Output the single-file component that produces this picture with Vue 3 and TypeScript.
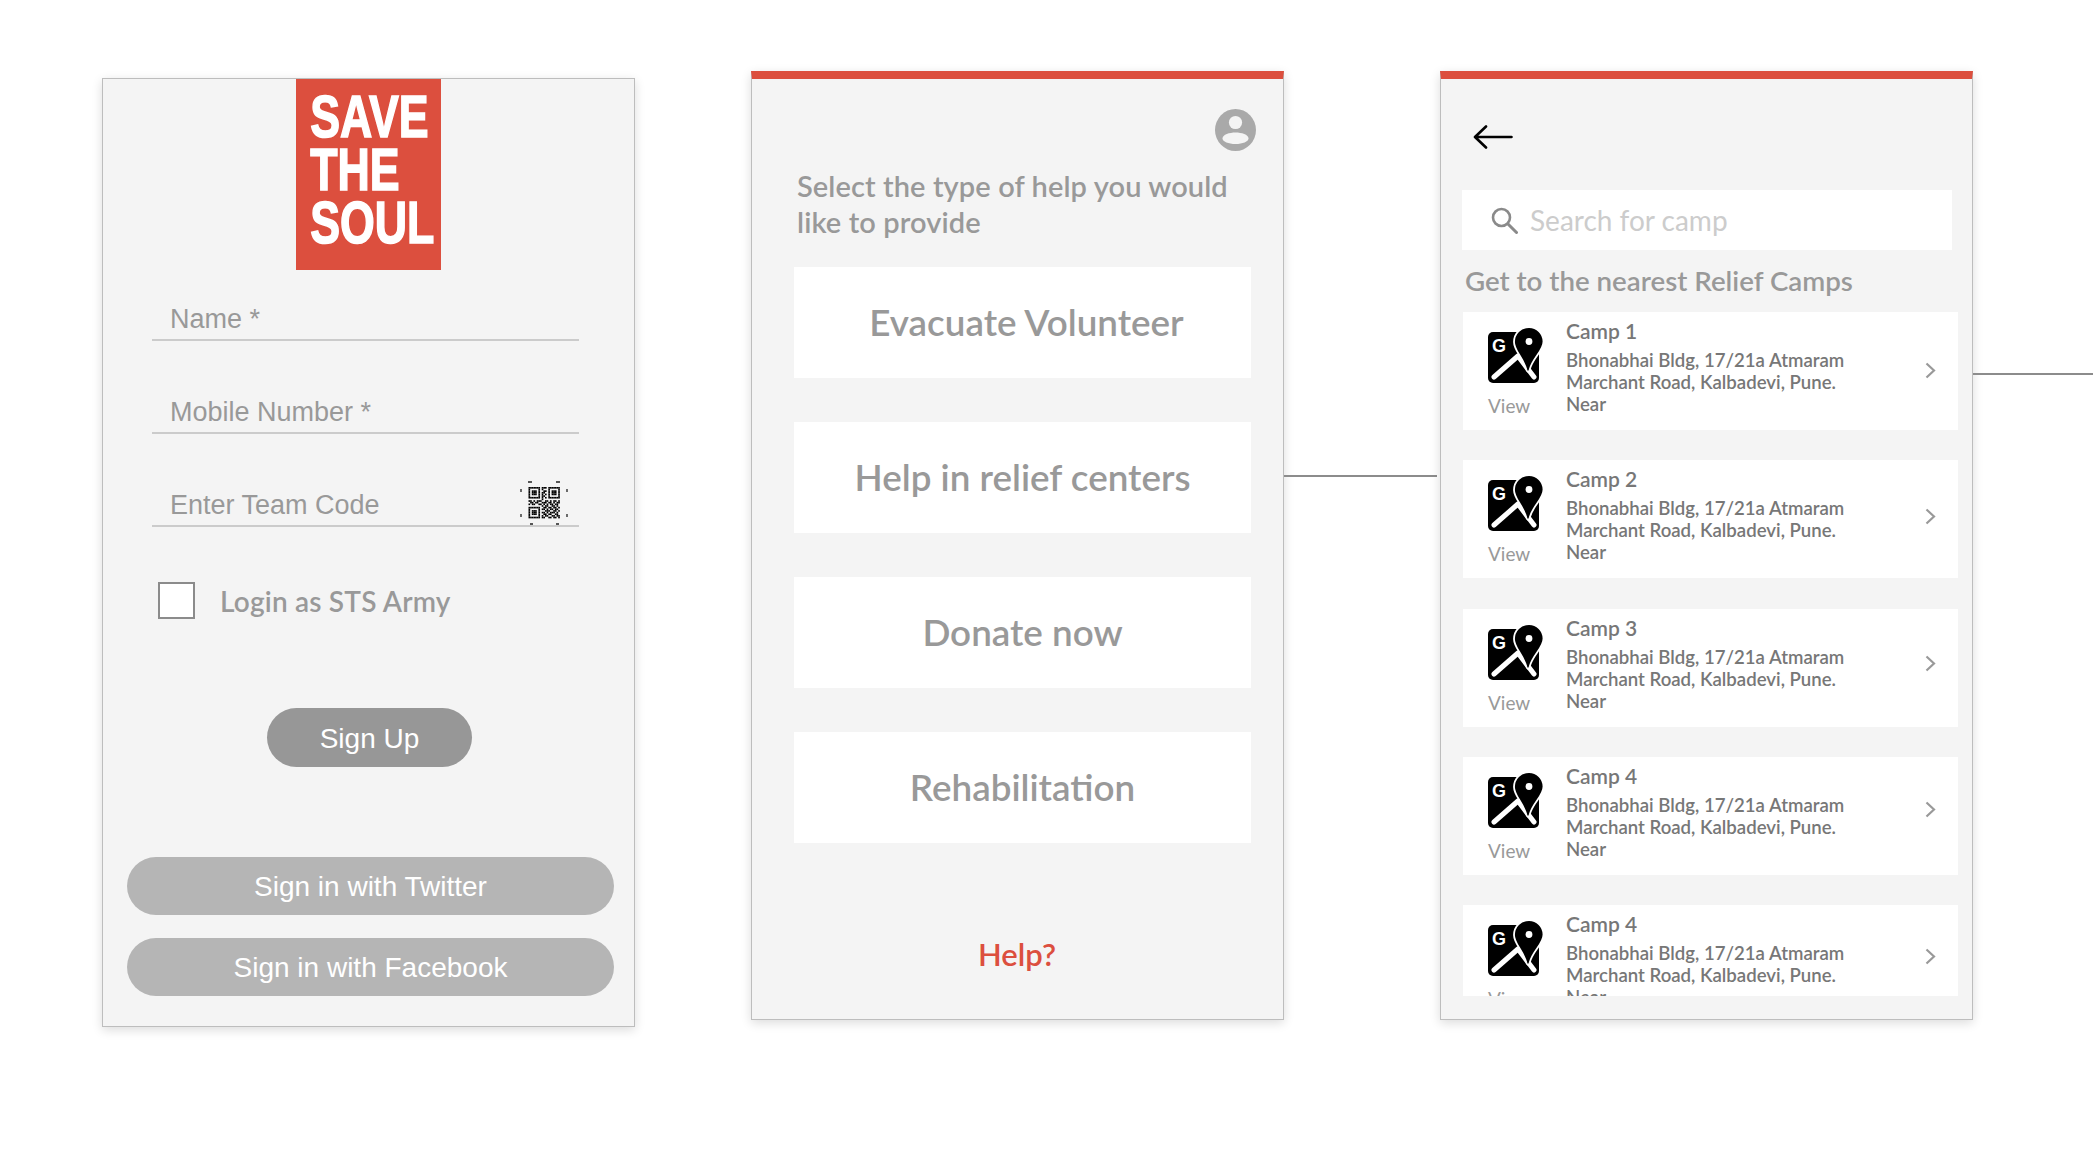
<script setup lang="ts">
const helpOptions = [
  { label: 'Evacuate Volunteer', cls: 'shift' },
  { label: 'Help in relief centers', cls: '' },
  { label: 'Donate now', cls: '' },
  { label: 'Rehabilitation', cls: '' },
]
const camps = [
  { name: 'Camp 1', chev: 50 },
  { name: 'Camp 2', chev: 48 },
  { name: 'Camp 3', chev: 46 },
  { name: 'Camp 4', chev: 44 },
  { name: 'Camp 4', chev: 43 },
]
const qrRows = [
  '1111111011101111111',
  '1000001010001000001',
  '1011101001101011101',
  '1011101011001011101',
  '1011101010101011101',
  '1000001011001000001',
  '1111111010101111111',
  '0000000010000000000',
  '1101011100110101101',
  '0110110011101101011',
  '1011001101010110110',
  '0000000010110011010',
  '1111111001101101101',
  '1000001011010110110',
  '1011101000111001101',
  '1011101011010111010',
  '1011101001101100110',
  '1000001010110011011',
  '1111111011001101101',
]
const qrCells: { x: number; y: number }[] = []
qrRows.forEach((row, y) => {
  row.split('').forEach((c, x) => {
    if (c === '1') qrCells.push({ x, y })
  })
})
</script>

<template>
  <div class="page">
    <section class="card login">
      <div class="logo">
        <div class="logo-text">SAVE<br />THE<br />SOUL</div>
      </div>
      <div class="field first"><span>Name *</span></div>
      <div class="field"><span>Mobile Number *</span></div>
      <div class="field">
        <span>Enter Team Code</span>
        <svg class="qr" viewBox="0 0 48 44" width="48" height="44">
          <g transform="translate(8.5 6) scale(1.65)">
            <rect v-for="(c, i) in qrCells" :key="i" :x="c.x" :y="c.y" width="1" height="1" fill="#000" />
          </g>
          <path d="M8 1h4M36 1h4M1 8v3M47 8v3M1 33v3M47 33v3M10 43h3M36 43h3" stroke="#222" stroke-width="1.3" fill="none" />
        </svg>
      </div>
      <label class="check-row">
        <span class="check"></span>
        <span class="check-label">Login as STS Army</span>
      </label>
      <div class="pill signup"><span>Sign Up</span></div>
      <div class="pill social first-social"><span>Sign in with Twitter</span></div>
      <div class="pill social second-social"><span>Sign in with Facebook</span></div>
    </section>

    <section class="card help">
      <div class="avatar-row">
        <svg width="41" height="42" viewBox="0 0 41 42">
          <ellipse cx="20.5" cy="21" rx="20.5" ry="21" fill="#a9a9a9" />
          <circle cx="20.5" cy="13.5" r="6.6" fill="#f4f4f4" />
          <path d="M7.5 29.5c0-4 7-6 13-6s13 2 13 6c0 3-6 5.5-13 5.5s-13-2.500-13-5.500z" fill="#f4f4f4" />
        </svg>
      </div>
      <p class="help-title">Select the type of help you would<br />like to provide</p>
      <div class="options">
        <div v-for="o in helpOptions" :key="o.label" class="option" :class="o.cls"><span>{{ o.label }}</span></div>
      </div>
      <div class="help-link">Help?</div>
    </section>

    <div class="connector left-conn"></div>

    <section class="card camps">
      <svg class="back" width="40" height="24" viewBox="0 0 40 24">
        <path d="M38.500 12H3M13 1.500 2 12l11 10.500" fill="none" stroke="#000" stroke-width="2.600" stroke-linecap="round" stroke-linejoin="round" />
      </svg>
      <div class="search">
        <svg width="27" height="27" viewBox="0 0 27 27">
          <circle cx="10.500" cy="10.500" r="8.500" fill="none" stroke="#8a8a8a" stroke-width="2.600" />
          <path d="M17 17l8.500 8.500" stroke="#8a8a8a" stroke-width="3" stroke-linecap="round" />
        </svg>
        <span>Search for camp</span>
      </div>
      <div class="camps-title">Get to the nearest Relief Camps</div>
      <div class="camp-list">
        <div v-for="(c, i) in camps" :key="i" class="camp">
          <div class="camp-icon">
            <svg width="56" height="57" viewBox="0 0 56 57">
              <rect x="0" y="5" width="51" height="51" rx="5" fill="#000" />
              <text x="4" y="24.500" font-family="Liberation Sans, sans-serif" font-weight="700" font-size="18" fill="#fff">G</text>
              <path d="M6 50 30 29 46 50" fill="none" stroke="#fff" stroke-width="5" stroke-linecap="round" stroke-linejoin="round" />
              <path d="M41 0c-8.500 0-15 6.500-15 15 0 9 9 15 12.500 28 1 2.500 2 2.500 3 0C45 30 55.500 24 55.500 14.500 55.500 6.500 49 0 41 0z" fill="#000" stroke="#fff" stroke-width="1.800" />
              <circle cx="41" cy="14.500" r="3.400" fill="#fff" />
            </svg>
            <span class="view">View</span>
          </div>
          <div class="camp-body">
            <div class="camp-name">{{ c.name }}</div>
            <div class="camp-addr">Bhonabhai Bldg, 17/21a Atmaram<br />Marchant Road, Kalbadevi, Pune.<br />Near</div>
          </div>
          <svg class="chev" :style="{ marginTop: c.chev + 'px' }" width="11" height="17" viewBox="0 0 11 17">
            <path d="M1.500 1.500 9 8.500 1.500 15.500" fill="none" stroke="#999" stroke-width="2.200" />
          </svg>
        </div>
      </div>
    </section>

    <div class="connector right-conn"></div>
  </div>
</template>

<style>
html, body { margin: 0; background: #fff; }
</style>

<style scoped>
.page {
  width: 2093px;
  height: 1152px;
  box-sizing: border-box;
  padding: 71px 0 0 102px;
  display: flex;
  align-items: flex-start;
  overflow: hidden;
  font-family: "Lato", "Liberation Sans", sans-serif;
  background: #fff;
}
.card {
  box-sizing: border-box;
  width: 533px;
  flex: none;
  background: #f4f4f4;
  border: 1px solid #bdbdbd;
  box-shadow: 0 3px 10px rgba(0, 0, 0, 0.14);
}
.login { margin-top: 7px; height: 949px; }
.logo {
  width: 145px;
  height: 191px;
  margin: 0 auto 0 193px;
  background: #dc4f3e;
  overflow: hidden;
}
.logo-text {
  padding: 11px 0 0 19px;
  font-family: "Liberation Sans", sans-serif;
  font-weight: 700;
  font-size: 60px;
  line-height: 53px;
  color: #fff;
  -webkit-text-stroke: 1.6px #fff;
  transform: scaleX(0.745);
  transform-origin: left top;
  white-space: nowrap;
}
.field {
  position: relative;
  box-sizing: border-box;
  width: 427px;
  height: 48px;
  margin: 45px 0 0 49px;
  padding: 0 0 4px 18px;
  border-bottom: 2px solid #cbcbcb;
  display: flex;
  align-items: flex-end;
  font-family: "Liberation Sans", sans-serif;
  font-size: 27px;
  line-height: 32px;
  color: #999;
}
.field.first { margin-top: 23px; }
.qr { position: absolute; right: 11px; top: 2px; }
.check-row { display: flex; align-items: center; margin: 55px 0 0 55px; }
.check {
  box-sizing: border-box;
  width: 37px;
  height: 37px;
  background: #fff;
  border: 2px solid #8b8b8b;
}
.check-label {
  margin-left: 25px;
  font-size: 28px;
  letter-spacing: 0.2px;
  font-weight: 600;
  color: #999;
}
.pill {
  box-sizing: border-box;
  display: flex;
  align-items: center;
  justify-content: center;
  color: #fff;
  font-family: "Liberation Sans", sans-serif;
  font-size: 28px;
  border-radius: 30px;
}
.pill span { position: relative; top: 1px; }
.signup { width: 205px; height: 59px; margin: 89px 0 0 164px; background: #979797; }
.social { width: 487px; height: 58px; margin-left: 24px; background: #b5b5b5; }
.first-social { margin-top: 90px; }
.second-social { margin-top: 23px; }

.help, .camps {
  height: 949px;
  border-top: 8px solid #dc4f3e;
}
.help { margin-left: 116px; padding-top: 30px; }
.avatar-row { display: flex; justify-content: flex-end; padding-right: 27px; }
.avatar-row svg { display: block; }
.help-title {
  margin: 17px 0 0 45px;
  font-size: 29px;
  line-height: 36px;
  letter-spacing: 0.1px;
  font-weight: 600;
  color: #999;
}
.options { display: flex; flex-direction: column; gap: 44px; margin: 27px 0 0 42px; width: 457px; }
.option {
  height: 111px;
  background: #fff;
  display: flex;
  align-items: center;
  justify-content: center;
  font-size: 36.800px;
  font-weight: 600;
  color: #999;
}
.option span { position: relative; top: -1px; }
.option.shift { padding-left: 8px; box-sizing: border-box; }
.help-link {
  margin-top: 92px;
  text-align: center;
  font-size: 31px;
  font-weight: 600;
  color: #dc4f3e;
  padding-right: 1px;
}
.connector { flex: none; height: 2px; background: #8c8c8c; }
.left-conn { width: 153px; margin: 404px 3px 0 0; }
.right-conn { width: 120px; margin-top: 302px; }
.camps { padding-top: 0; overflow: visible; }
.back { display: block; margin: 46px 0 0 32px; }
.search {
  display: flex;
  align-items: center;
  box-sizing: border-box;
  width: 490px;
  height: 60px;
  margin: 41px 0 0 21px;
  padding-left: 29px;
  background: #fff;
  font-size: 28px;
  color: #ccc;
}
.search span { margin-left: 12px; }
.camps-title {
  margin: 13px 0 0 24px;
  font-size: 27.700px;
  line-height: 36px;
  font-weight: 600;
  color: #999;
}
.camp-list {
  width: 495px;
  height: 684px;
  margin: 13px 0 0 22px;
  display: flex;
  flex-direction: column;
  gap: 30.250px;
  overflow: hidden;
}
.camp {
  flex: none;
  height: 118px;
  background: #fff;
  display: flex;
  align-items: flex-start;
  color: #777;
}
.camp-icon { width: 78px; margin-left: 25px; padding-top: 15px; flex: none; }
.camp-icon svg { display: block; }
.view { display: block; margin-top: 10px; font-size: 19px; line-height: 24px; color: #999; }
.camp-body { width: 356px; flex: none; padding-top: 5px; }
.camp-name { font-size: 21px; line-height: 28px; font-weight: 600; }
.camp-addr { margin-top: 4px; font-size: 18.600px; line-height: 22px; font-weight: 600; }
.chev { flex: none; display: block; margin-left: 3px; }
</style>
